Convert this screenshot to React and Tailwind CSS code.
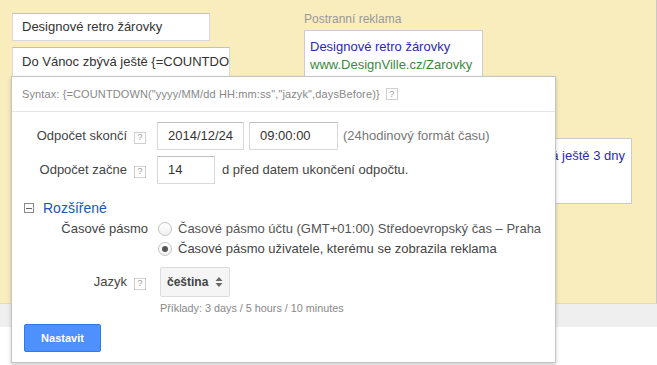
import React from "react";

function Help() {
  return (
    <span className="inline-flex w-[12px] h-[12px] items-center justify-center border border-[#cfcfcf] bg-white text-[9px] leading-none text-[#999] shrink-0">
      ?
    </span>
  );
}

function Radio({ checked }) {
  return (
    <span className="inline-flex w-[14px] h-[14px] rounded-full border border-[#c4c4c4] bg-gradient-to-b from-white to-[#f1f1f1] items-center justify-center shrink-0">
      {checked && <span className="w-[6px] h-[6px] rounded-full bg-[#555]" />}
    </span>
  );
}

export default function App() {
  return (
    <div className="relative w-[657px] h-[365px] overflow-hidden bg-white font-['Liberation_Sans',Arial,sans-serif] text-[#444]">
      {/* yellow panel */}
      <div className="h-[304px] bg-[#f9edbe] border-r border-b border-r-[#c8c8c8] border-b-[#e8dcae] flex">
        <div className="flex flex-col gap-[6px] pl-[12px] pt-[13px] w-[304px] shrink-0">
          <div className="w-[198px] h-[28px] bg-white border border-[#d9d9d9] border-t-[#c0c0c0] pl-[9px] flex items-center text-[13px] text-[#333]">
            Designové retro žárovky
          </div>
          <div className="w-[218px] h-[30px] bg-white border border-[#d9d9d9] border-t-[#c0c0c0] pl-[9px] flex items-center text-[13px] text-[#333] overflow-hidden whitespace-nowrap">
            Do Vánoc zbývá ještě {"{"}=COUNTDOWN(
          </div>
        </div>
        <div className="flex flex-col pt-[12px]">
          <div className="text-[12px] leading-[14px] text-[#999] mb-[4px]">Postranní reklama</div>
          <div className="w-[179px] h-[96px] bg-white border border-[#ccc] pl-[5px] pt-[7px] text-[13px] leading-[18px]">
            <div className="text-[#2a2ab0]">Designové retro žárovky</div>
            <div className="text-[#3b8a3b]">www.DesignVille.cz/Zarovky</div>
            <div className="text-[#222]">Do Vánoc zbývá ještě 3 dny</div>
          </div>
          <div className="mt-[12px] w-[328px] h-[66px] bg-white border border-[#ccc] flex justify-end pr-[6px] pt-[8px] text-[13px] leading-[18px] text-[#2a2ab0] whitespace-nowrap">
            Designové retro žárovky – Do Vánoc zbývá ještě 3 dny
          </div>
        </div>
      </div>
      <div className="h-[23px] bg-[#efefef]" />

      {/* popup */}
      <div className="absolute left-[11px] top-[76px] w-[545px] bg-white border border-[#c4c4c4] shadow-[0_2px_4px_rgba(0,0,0,0.2)]">
        <div className="h-[35px] border-b border-[#e5e5e5] pl-[10px] flex items-center gap-[6px] text-[11px] tracking-[0.12px] text-[#888]">
          <span>Syntax: {"{"}=COUNTDOWN("yyyy/MM/dd HH:mm:ss","jazyk",daysBefore){"}"}</span>
          <Help />
        </div>
        <div className="pt-[10px] pb-[10px] text-[13px]">
          {/* row 1 */}
          <div className="flex items-center h-[28px]">
            <span className="w-[115px] text-right text-[#444]">Odpočet skončí</span>
            <span className="ml-[7px]"><Help /></span>
            <div className="ml-[11px] w-[87px] h-[28px] border border-[#d9d9d9] border-t-[#c0c0c0] pl-[10px] flex items-center text-[#333]">2014/12/24</div>
            <div className="ml-[5px] w-[89px] h-[28px] border border-[#d9d9d9] border-t-[#c0c0c0] pl-[10px] flex items-center text-[#333]">09:00:00</div>
            <span className="ml-[5px] text-[#777]">(24hodinový formát času)</span>
          </div>
          {/* row 2 */}
          <div className="flex items-center h-[28px] mt-[6px]">
            <span className="w-[115px] text-right text-[#444]">Odpočet začne</span>
            <span className="ml-[7px]"><Help /></span>
            <div className="ml-[11px] w-[58px] h-[28px] border border-[#d9d9d9] border-t-[#c0c0c0] pl-[10px] flex items-center text-[#333]">14</div>
            <span className="ml-[7px] text-[#444]">d před datem ukončení odpočtu.</span>
          </div>
          {/* advanced */}
          <div className="flex items-center h-[20px] mt-[14px] pl-[12px]">
            <span className="w-[10px] h-[10px] border border-[#888] flex items-center justify-center">
              <span className="w-[6px] h-[1px] bg-[#666]" />
            </span>
            <span className="ml-[9px] text-[14px] text-[#2255bb]">Rozšířené</span>
          </div>
          <div className="flex mt-[1px]">
            <span className="w-[136px] text-right leading-[20px] text-[#444]">Časové pásmo</span>
            <div className="ml-[10px] flex flex-col">
              <div className="flex items-center h-[20px]">
                <Radio />
                <span className="ml-[6px] text-[#555]">Časové pásmo účtu (GMT+01:00) Středoevropský čas – Praha</span>
              </div>
              <div className="flex items-center h-[20px]">
                <Radio checked />
                <span className="ml-[6px] text-[#444]">Časové pásmo uživatele, kterému se zobrazila reklama</span>
              </div>
            </div>
          </div>
          {/* language */}
          <div className="flex items-center h-[30px] mt-[8px]">
            <span className="w-[115px] text-right text-[#444]">Jazyk</span>
            <span className="ml-[7px]"><Help /></span>
            <div className="ml-[14px] w-[70px] h-[30px] bg-[#f5f5f5] border border-[#dcdcdc] rounded-[2px] flex items-center pl-[6px] pr-[6px] justify-between">
              <span className="text-[12px] font-bold text-[#444]">čeština</span>
              <svg width="8" height="12" viewBox="0 0 8 12">
                <path d="M4 1 L7.5 5 L0.5 5 Z" fill="#666" />
                <path d="M4 11 L7.5 7 L0.5 7 Z" fill="#666" />
              </svg>
            </div>
          </div>
          <div className="ml-[148px] mt-[4px] h-[14px] text-[10.8px] leading-[14px] text-[#888]">
            Příklady: 3 days / 5 hours / 10 minutes
          </div>
          <div className="ml-[12px] mt-[9px] w-[77px] h-[28px] bg-[#4d90fe] border border-[#3079ed] rounded-[2px] flex items-center justify-center text-[11px] font-bold text-white">
            Nastavit
          </div>
        </div>
      </div>
    </div>
  );
}
